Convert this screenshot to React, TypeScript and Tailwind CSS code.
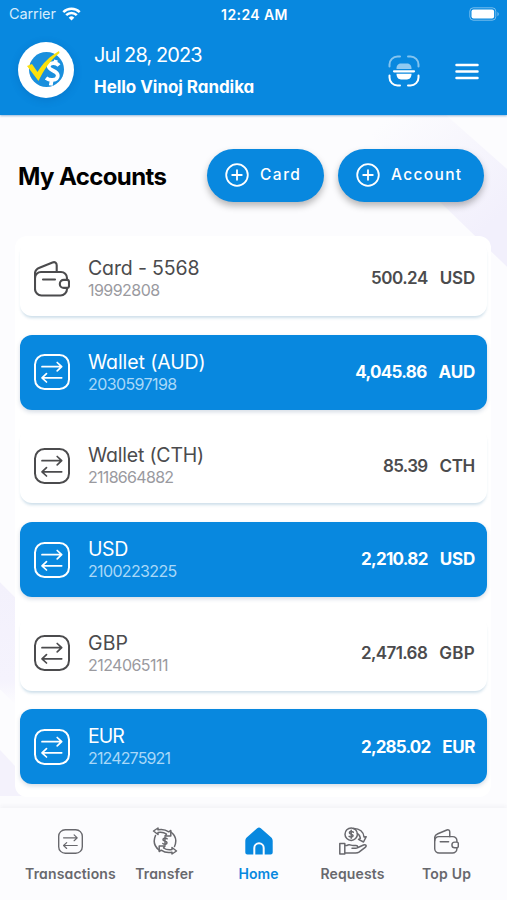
import type { ReactNode } from "react";

const geometric = "font-['Inter','Liberation_Sans',sans-serif] [font-feature-settings:'cv11'] whitespace-nowrap";

function SwapIcon({ className }: { className: string }) {
  return (
    <svg viewBox="0 0 36 36" fill="none" stroke="currentColor" strokeLinecap="round" strokeLinejoin="round" className={className}>
      <rect x="1" y="1" width="34" height="34" rx="9.5" strokeWidth="2" />
      <path d="M8 12.7H27.5M23.2 8.5L27.7 12.7L23.2 16.9" strokeWidth="1.7" />
      <path d="M27.7 23.8H8.2M12.5 19.6L8 23.8L12.5 28" strokeWidth="1.7" />
    </svg>
  );
}

function WalletIcon({ className }: { className: string }) {
  return (
    <svg viewBox="0 0 36 36" fill="none" stroke="currentColor" strokeLinecap="round" strokeLinejoin="round" strokeWidth="2.1" className={className}>
      <path d="M33 18.5V17a6 6 0 0 0-6-6H7a6 6 0 0 0-6 6V28a6.5 6.5 0 0 0 6.5 6.5H26.5a6.500 6.5 0 0 0 6.5-6.5V27" />
      <path d="M1 17V12.5C1 9 3 7.8 5.5 6.8L18.5 1.5C21 .5 22.7 2 22.7 4.2V11" />
      <path d="M33 18.9H29.800a4 4 0 0 0 0 8H33C34.5 26.900 35 26 35 25V20.800C35 19.800 34.5 18.900 33 18.900Z" />
      <path d="M9 18.5H21" />
    </svg>
  );
}

function PlusCircle() {
  return (
    <svg viewBox="0 0 24 24" fill="none" stroke="currentColor" strokeLinecap="round" className="size-6 shrink-0">
      <circle cx="12" cy="12" r="10.8" strokeWidth="1.8" />
      <path d="M12 7.2V16.8M7.2 12H16.8" strokeWidth="1.8" />
    </svg>
  );
}

function Logo() {
  return (
    <svg viewBox="0 0 56 56" className="size-14 shrink-0 rounded-full bg-white shadow-[0_2px_8px_rgba(0,60,130,0.2)]">
      <circle cx="28.5" cy="27.5" r="17.5" fill="#198fdd" />
      <path d="M41 23.5C38.5 20.5 31 20 30.7 24.5C30.5 28.7 40.3 28.3 39.8 33.8C39.3 39 31.5 38.8 28 36M38 18L37 21.5M33.7 38L32.8 43.5" fill="none" stroke="#fff" strokeWidth="3.8" />
      <path d="M9 24L14 22L19.5 30C24.5 21.5 31.5 14.5 41 9L41.5 11C32.5 18 25.5 28 20.5 39Z" fill="#fbe00c" />
    </svg>
  );
}

function ScanIcon() {
  return (
    <svg viewBox="0 0 32 32" fill="none" stroke="#fff" strokeLinecap="round" strokeWidth="2" className="mt-px h-8 w-8">
      <path d="M1.5 11.5V9.5A8 8 0 0 1 9.5 1.5H12M20 1.5H22.5A8 8 0 0 1 30.5 9.5V11.5" opacity=".5" />
      <path d="M1.5 20.5V22.5A8 8 0 0 0 9.5 30.5H12M20 30.5H22.5A8 8 0 0 0 30.5 22.5V20.5" />
      <path d="M8.5 14V13.5C8.5 10 10.5 8.5 13 8.5H19C21.5 8.5 23.5 10 23.5 13.5V14Z" fill="#fff" stroke="none" opacity=".55" />
      <path d="M8.5 18.8H23.5C23.5 22.5 21.5 24.5 19 24.5H13C10.5 24.5 8.5 22.5 8.5 18.8Z" fill="#fff" stroke="none" />
      <path d="M6 16.3H26" strokeWidth="2.2" />
    </svg>
  );
}

function TransferIcon() {
  return (
    <svg viewBox="0 0 26 28" fill="none" stroke="currentColor" strokeLinecap="round" strokeLinejoin="round" strokeWidth="1.5" className="h-7 w-[26px]">
      <path d="M6 1L1.5 4L6 7.5V5.5C9 5 12 5.300 14.5 7L13 9H18.8V3.5L16.8 4.8C13.5 2.5 9.5 2 6 2.8Z" />
      <path d="M20 27L24.5 24L20 20.5V22.5C17 23 14 22.7 11.5 21L13 19H7.2V24.5L9.2 23.2C12.5 25.5 16.5 26 20 25.2Z" />
      <path d="M3.5 8.5C1.3 13.5 2 19 7 23M22.5 19.5C24.7 14.5 24 9 19 5" />
      <path d="M15.2 11.8C13 10.3 10.8 11.3 11 12.8C11.2 14.4 15 13.7 15 15.7C15 17.3 12.5 17.8 10.8 16.5M13 10V18" />
    </svg>
  );
}

function RequestsIcon() {
  return (
    <svg viewBox="0 0 28 28" fill="none" stroke="currentColor" strokeLinecap="round" strokeLinejoin="round" strokeWidth="1.5" className="size-7">
      <circle cx="12.2" cy="7.2" r="6.2" />
      <path d="M14.3 5.2C12.3 3.8 10.2 4.6 10.4 6C10.6 7.5 14.2 6.9 14.1 8.8C14 10.2 11.7 10.5 10.1 9.4M12.2 3.2V11.3" />
      <path d="M14.500 1.400C20.5 1.2 24.8 5 25 10L27.2 9.700L24.5 15L19.5 12.3L21.4 11.3C20.8 8.800 20 7.4 18.4 6.5" />
      <path d="M.8 16.5H5.8V27H.8ZM5.8 18.5H8C10 16.8 12 18.5 14 18.5H17C19.2 18.5 19.2 21.3 17 21.3H13M19 20.5L24.5 18C26.8 17 28 19 26.2 20.3L20 25.2C18.5 26.3 17 26 15 26H5.8" />
    </svg>
  );
}

function HomeIcon() {
  return (
    <svg viewBox="0 0 28 28" className="size-7">
      <path d="M12.200 1.200a2.800 2.800 0 0 1 3.600 0L26 10.200C27.200 11.300 27.700 12.300 27.700 14V25.500Q27.700 27.600 25.600 27.600H19.700V21a5.700 5.700 0 0 0-11.400 0V27.600H2.400Q.3 27.600 .3 25.500V14C.3 12.300 .8 11.300 2 10.200Z" fill="currentColor" />
      <path d="M10.300 27.600V21a3.700 3.700 0 0 1 7.400 0V27.600Z" fill="currentColor" />
    </svg>
  );
}

type Account = { name: string; number: string; amount: string; unit: string; icon: "wallet" | "swap"; nameCls: string; numCls: string; amountCls: string; unitCls: string };

const accounts: Account[] = [
  { name: "Card - 5568", number: "19992808", amount: "500.24", unit: "USD", icon: "wallet", nameCls: "tracking-[-0.15px]", numCls: "tracking-[-0.55px]", amountCls: "tracking-[-0.5px]", unitCls: "tracking-[-0.2px]" },
  { name: "Wallet (AUD)", number: "2030597198", amount: "4,045.86", unit: "AUD", icon: "swap", nameCls: "tracking-[-0.1px]", numCls: "tracking-[-0.6px]", amountCls: "tracking-[-0.7px]", unitCls: "tracking-[-0.2px]" },
  { name: "Wallet (CTH)", number: "2118664882", amount: "85.39", unit: "CTH", icon: "swap", nameCls: "tracking-[-0.2px]", numCls: "tracking-[-0.7px]", amountCls: "tracking-[-0.7px]", unitCls: "tracking-[-0.3px]" },
  { name: "USD", number: "2100223225", amount: "2,210.82", unit: "USD", icon: "swap", nameCls: "tracking-[-0.4px]", numCls: "tracking-[-0.65px]", amountCls: "tracking-[-0.7px]", unitCls: "tracking-[-0.2px]" },
  { name: "GBP", number: "2124065111", amount: "2,471.68", unit: "GBP", icon: "swap", nameCls: "tracking-[0.1px]", numCls: "tracking-[-0.55px]", amountCls: "tracking-[-0.6px]", unitCls: "tracking-[0.3px]" },
  { name: "EUR", number: "2124275921", amount: "2,285.02", unit: "EUR", icon: "swap", nameCls: "tracking-[-1px]", numCls: "tracking-[-0.85px]", amountCls: "tracking-[-0.85px]", unitCls: "tracking-[-0.4px]" },
];

function AccountRow({ account, filled }: { account: Account; filled: boolean }) {
  return (
    <div className={`flex h-[75px] shrink-0 items-center rounded-[12px] pl-3.5 pr-3 ${filled ? "bg-[#0888df] text-white shadow-[0_2px_4px_rgba(20,60,110,0.18)]" : "bg-white text-[#4b4b4d] shadow-[0_3px_3px_-1px_rgba(30,110,160,0.22)]"}`}>
      {account.icon === "wallet" ? <WalletIcon className="size-9 shrink-0" /> : <SwapIcon className="size-9 shrink-0" />}
      <div className="ml-[18px] flex flex-1 flex-col">
        <span className={`text-[19.5px] leading-[23px] ${account.nameCls}`}>{account.name}</span>
        <span className={`text-[16px] leading-[20px] ${filled ? "text-[#a9d8f8]" : "text-[#9a9a9f]"} ${account.numCls}`}>{account.number}</span>
      </div>
      <div className={`flex gap-[12px] pt-px text-[17px] ${filled ? "font-bold" : "font-semibold"}`}>
        <span className={account.amountCls}>{account.amount}</span>
        <span className={account.unitCls}>{account.unit}</span>
      </div>
    </div>
  );
}

function NavItem({ icon, label, active, className }: { icon: ReactNode; label: string; active?: boolean; className?: string }) {
  return (
    <div className={`flex w-[94px] flex-col items-center ${active ? "text-[#0888df]" : "text-[#68686d]"}`}>
      <div className="flex h-7 items-center justify-center">{icon}</div>
      <span className={`mt-[9px] text-[14px] font-semibold leading-5 ${className ?? ""}`}>{label}</span>
    </div>
  );
}

export default function App() {
  return (
    <div className={`flex h-[900px] w-[507px] flex-col overflow-hidden bg-[#fcfcfe] ${geometric}`}>
      <header className="relative z-10 flex h-[115px] shrink-0 flex-col bg-[#0888df] text-white shadow-[0_1px_2px_rgba(0,80,160,0.4)]">
        <div className="grid h-[28px] grid-cols-3 items-center pl-[9px] pr-[7px] [font-feature-settings:normal]">
          <div className="flex items-center text-[14.5px] leading-none text-[#d5ecfc]">
            <span className="tracking-[-0.1px]">Carrier</span>
            <svg viewBox="0 0 19 14" className="ml-1.5 h-3.5 w-[19px]" fill="none" stroke="#fff" strokeWidth="2.5">
              <path d="M1.3 5.2a11.6 11.6 0 0 1 16.4 0M4.2 8.2a7.5 7.5 0 0 1 10.6 0" />
              <path d="M9.5 13.5L6.7 10.7a4 4 0 0 1 5.6 0Z" fill="#fff" stroke="none" />
            </svg>
          </div>
          <span className="text-center text-[14px] font-semibold tracking-[0.4px]">12:24 AM</span>
          <svg viewBox="0 0 31 14" className="h-3.5 w-[31px] justify-self-end">
            <rect x=".8" y=".8" width="26" height="12.4" rx="3.5" fill="none" stroke="#fff" strokeOpacity=".45" />
            <rect x="2.5" y="2.5" width="22.6" height="9" rx="2" fill="#fff" />
            <path d="M28.5 4.7Q31 7 28.5 9.3Z" fill="#fff" opacity=".5" />
          </svg>
        </div>
        <div className="flex h-[84px] items-center pl-[18px] pr-[28px]">
          <Logo />
          <div className="ml-5 flex flex-1 flex-col pt-0.5">
            <span className="text-[20px] leading-[32px] tracking-[-0.9px]">Jul 28, 2023</span>
            <span className="text-[17px] font-bold leading-[32px] tracking-[-0.05px]">Hello Vinoj Randika</span>
          </div>
          <ScanIcon />
          <svg viewBox="0 0 24 17" className="ml-[35px] mt-0.5 h-[17px] w-6" stroke="#fff" strokeWidth="2.5" strokeLinecap="round">
            <path d="M1.5 2H22.5M1.5 8.5H22.5M1.5 15H22.5" />
          </svg>
        </div>
      </header>

      <main className="relative flex flex-1 flex-col pl-[15px] pr-4">
        <svg viewBox="0 0 507 694" preserveAspectRatio="none" className="absolute inset-0 h-full w-full">
          <defs>
            <linearGradient id="ribbon" gradientUnits="userSpaceOnUse" x1="390" y1="0" x2="490" y2="110">
              <stop offset="0" stopColor="#fcfcfe" />
              <stop offset="1" stopColor="#f2f0fc" />
            </linearGradient>
            <linearGradient id="fade" x1="0" y1="0" x2="0" y2="1">
              <stop offset="0" stopColor="#f3f1fc" />
              <stop offset=".8" stopColor="#f5f3fd" />
              <stop offset="1" stopColor="#fcfcfe" />
            </linearGradient>
          </defs>
          <path d="M350 0H446L507 54V152Z" fill="url(#ribbon)" />
          <path d="M0 468L15 483V590L0 575Z" fill="url(#fade)" />
          <path d="M0 636L30 668V682H0Z" fill="#f4f2fc" />
        </svg>
        <div className="relative flex h-[121px] shrink-0 items-center pl-[3px] pr-[7px]">
          <h1 className="flex-1 pt-0.5 text-[24px] font-bold tracking-[-0.6px] text-black">My Accounts</h1>
          <button className="flex h-[53px] w-[117px] items-center gap-[11px] rounded-full bg-[#0888df] pb-0.5 pl-[18px] text-[15.5px] font-medium tracking-[1.5px] text-white shadow-[0_4px_7px_rgba(0,0,0,0.28)] [font-feature-settings:normal]">
            <PlusCircle />Card
          </button>
          <button className="ml-3.5 flex h-[53px] w-[146px] items-center gap-[11px] rounded-full bg-[#0888df] pb-0.5 pl-[18px] text-[15.5px] font-medium tracking-[1.35px] text-white shadow-[0_4px_7px_rgba(0,0,0,0.28)] [font-feature-settings:normal]">
            <PlusCircle />Account
          </button>
        </div>
        <div className="relative flex h-[561px] shrink-0 flex-col gap-[18.7px] rounded-[12px] bg-white pl-[5px] pr-1 pt-[5px]">
          {accounts.map((account, i) => (
            <AccountRow key={account.name} account={account} filled={i % 2 === 1} />
          ))}
        </div>
      </main>

      <nav className="relative flex h-[92px] shrink-0 justify-center bg-[#fcfcfe] pl-[10px] pt-[19px] shadow-[0_-2px_4px_rgba(60,60,90,0.05)]">
        <NavItem icon={<SwapIcon className="size-[25px]" />} label="Transactions" className="tracking-[0.15px]" />
        <NavItem icon={<TransferIcon />} label="Transfer" className="tracking-[0.1px]" />
        <NavItem icon={<HomeIcon />} label="Home" active className="tracking-[0.1px]" />
        <NavItem icon={<RequestsIcon />} label="Requests" className="tracking-[0.15px]" />
        <NavItem icon={<WalletIcon className="size-[25px]" />} label="Top Up" className="tracking-[0.2px]" />
      </nav>
    </div>
  );
}
